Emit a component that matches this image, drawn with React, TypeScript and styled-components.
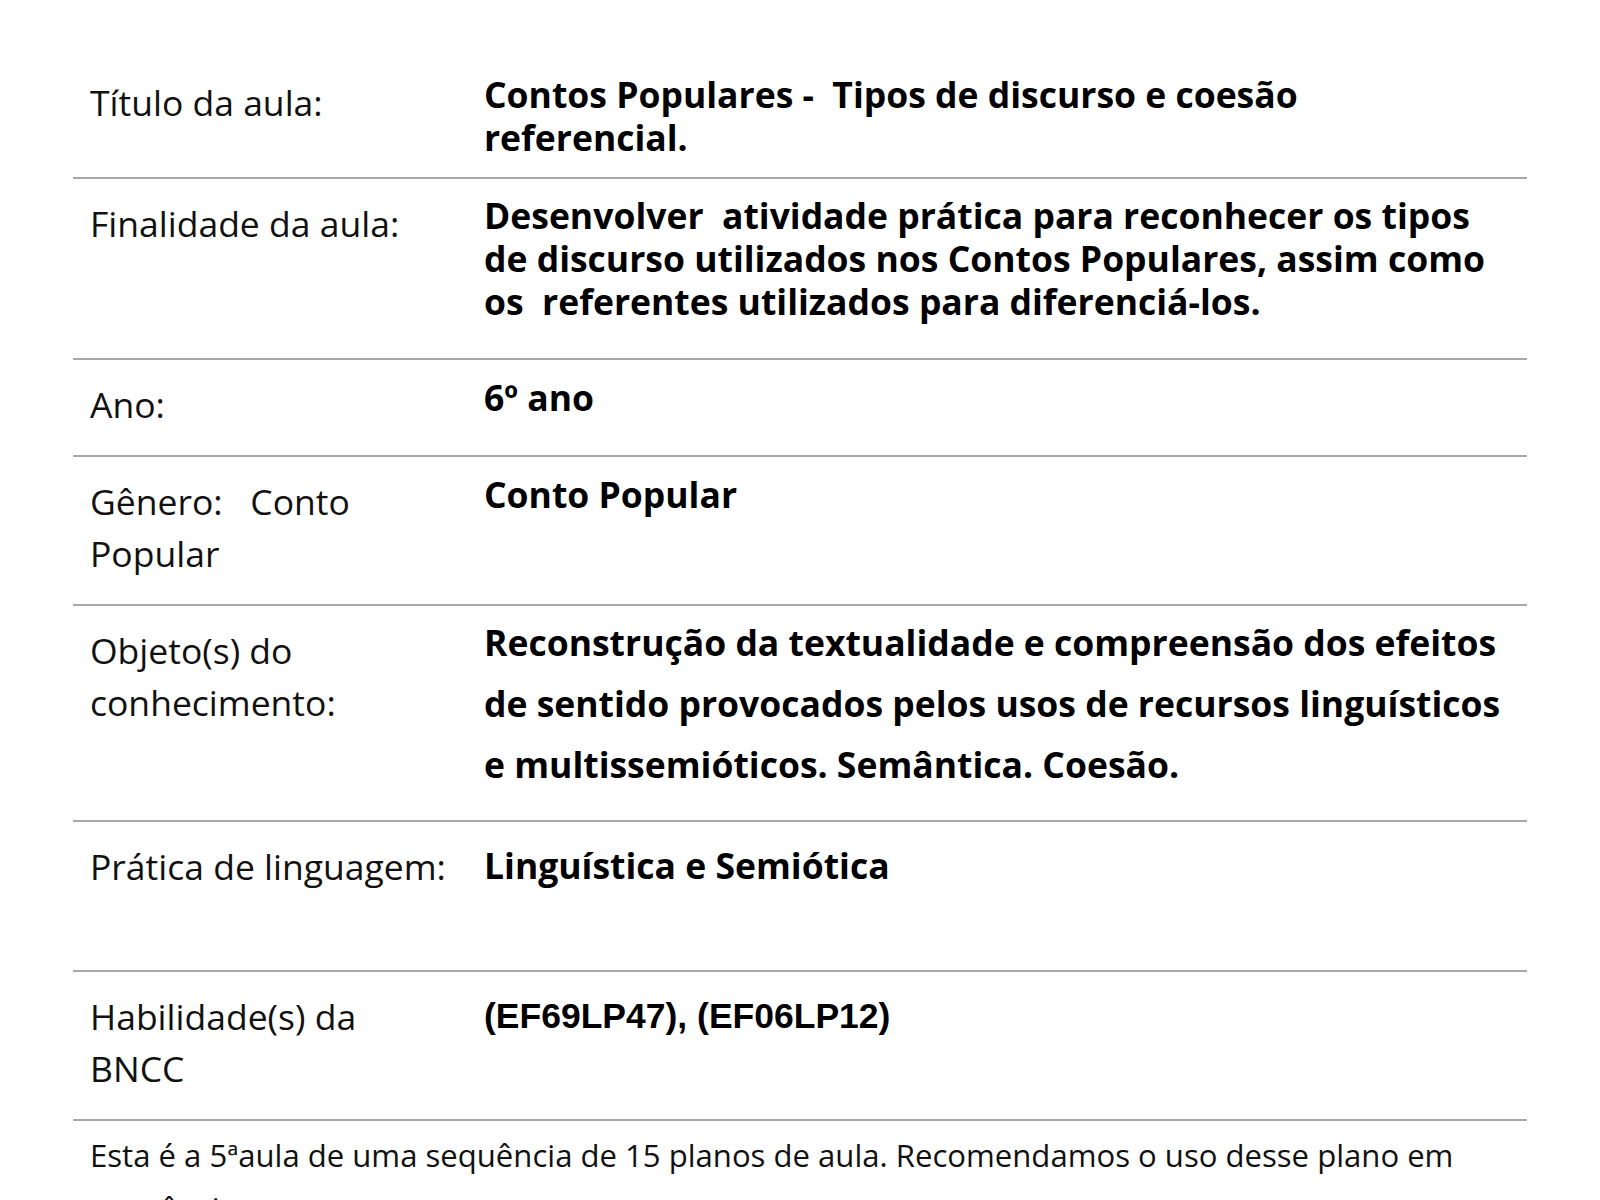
import React from "react";
import styled, { createGlobalStyle } from "styled-components";

const GlobalStyle = createGlobalStyle`
  html, body {
    margin: 0;
    padding: 0;
    background: #ffffff;
  }
  body {
    font-family: "Open Sans", "Noto Sans", sans-serif;
    color: #000000;
  }
`;

const Page = styled.main`
  width: 1600px;
  height: 1200px;
  overflow: hidden;
  box-sizing: border-box;
  padding: 58px 0 0 73px;
`;

const Table = styled.section`
  width: 1454px;
  display: flex;
  flex-direction: column;
`;

const Row = styled.div<{ $h: number }>`
  display: grid;
  grid-template-columns: 411px 1fr;
  height: ${(p) => p.$h}px;
  box-sizing: content-box;
  border-bottom: 2px solid #a8a8a8;
`;

const Label = styled.div`
  padding: 18px 0 0 17px;
  font-family: "Open Sans", "Noto Sans", sans-serif;
  font-size: 35.5px;
  line-height: 52px;
  font-weight: 400;
  color: #111111;
  white-space: pre;
`;

const Value = styled.div<{ $pt: number; $lh: number }>`
  padding-top: ${(p) => p.$pt}px;
  font-family: "Open Sans", "Noto Sans", sans-serif;
  font-size: 35.5px;
  line-height: ${(p) => p.$lh}px;
  font-weight: 700;
  color: #000000;
  white-space: pre;
`;

const CodeValue = styled.div<{ $pt: number }>`
  padding-top: ${(p) => p.$pt}px;
  font-family: "Liberation Sans", Arial, sans-serif;
  font-size: 35.5px;
  line-height: 41px;
  font-weight: 700;
  color: #000000;
`;

const Line = styled.span`
  display: block;
`;

const Note = styled.p`
  width: 1437px;
  margin: 0;
  padding: 8px 0 0 17px;
  font-family: "Open Sans", "Noto Sans", sans-serif;
  font-size: 31.1px;
  line-height: 53px;
  color: #111111;
`;

type RowData = {
  label: string[];
  value: string[];
  h: number;
  pt: number;
  lh: number;
  code?: boolean;
};

const rows: RowData[] = [
  {
    label: ["Título da aula:"],
    value: ["Contos Populares -  Tipos de discurso e coesão", "referencial."],
    h: 119,
    pt: 15,
    lh: 43,
  },
  {
    label: ["Finalidade da aula:"],
    value: [
      "Desenvolver  atividade prática para reconhecer os tipos",
      "de discurso utilizados nos Contos Populares, assim como",
      "os  referentes utilizados para diferenciá-los.",
    ],
    h: 179,
    pt: 15,
    lh: 43,
  },
  { label: ["Ano:"], value: ["6º ano"], h: 95, pt: 16, lh: 43 },
  {
    label: ["Gênero:   Conto", "Popular"],
    value: ["Conto Popular"],
    h: 147,
    pt: 16,
    lh: 43,
  },
  {
    label: ["Objeto(s) do", "conhecimento:"],
    value: [
      "Reconstrução da textualidade e compreensão dos efeitos",
      "de sentido provocados pelos usos de recursos linguísticos",
      "e multissemióticos. Semântica. Coesão.",
    ],
    h: 214,
    pt: 6,
    lh: 61,
  },
  {
    label: ["Prática de linguagem:"],
    value: ["Linguística e Semiótica"],
    h: 148,
    pt: 22,
    lh: 43,
  },
  {
    label: ["Habilidade(s) da", "BNCC"],
    value: ["(EF69LP47), (EF06LP12)"],
    h: 147,
    pt: 24,
    lh: 41,
    code: true,
  },
];

export default function App() {
  return (
    <>
      <GlobalStyle />
      <Page>
        <Table>
          {rows.map((r, i) => (
            <Row key={i} $h={r.h}>
              <Label>
                {r.label.map((l, j) => (
                  <Line key={j}>{l}</Line>
                ))}
              </Label>
              {r.code ? (
                <CodeValue $pt={r.pt}>{r.value[0]}</CodeValue>
              ) : (
                <Value $pt={r.pt} $lh={r.lh}>
                  {r.value.map((l, j) => (
                    <Line key={j}>{l}</Line>
                  ))}
                </Value>
              )}
            </Row>
          ))}
        </Table>
        <Note>
          Esta é a 5ªaula de uma sequência de 15 planos de aula. Recomendamos o
          uso desse plano em sequência.
        </Note>
      </Page>
    </>
  );
}
